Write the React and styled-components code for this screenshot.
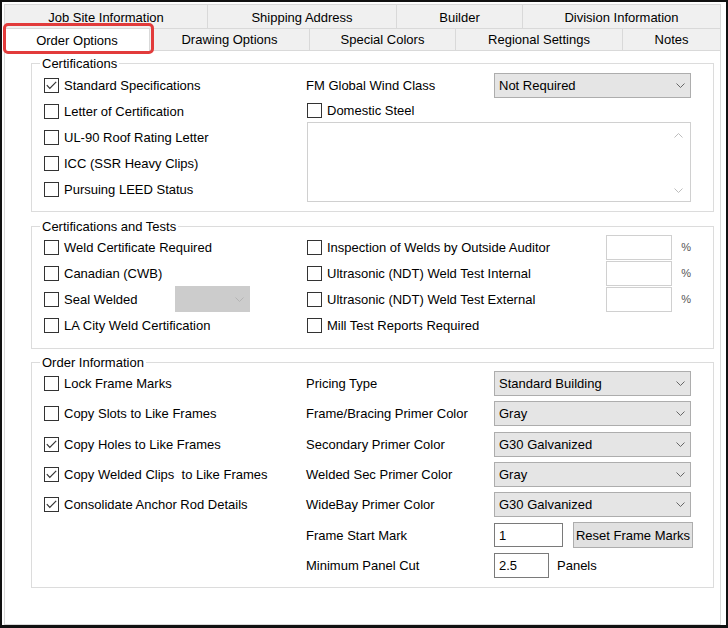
import React from 'react'
import styled, { createGlobalStyle } from 'styled-components'

const GlobalStyle = createGlobalStyle`
  html, body {
    margin: 0;
    padding: 0;
    background: #fff;
  }
  body {
    font-family: "Liberation Sans", Arial, sans-serif;
    font-size: 13px;
    color: #000;
  }
  * { box-sizing: border-box; }
`

const Frame = styled.div`
  position: relative;
  width: 728px;
  height: 628px;
  border: 2px solid #111;
  border-bottom-width: 3px;
  background: #fff;
  padding: 2px 5px 0 2px;
  display: flex;
  flex-direction: column;
`

const TabRow = styled.div`
  display: flex;
  height: ${props => props.h}px;
  flex: none;
`

const Tab = styled.div`
  width: ${props => props.w}px;
  flex: none;
  display: flex;
  align-items: center;
  justify-content: center;
  padding-top: ${props => props.shift || 0}px;
  background: ${props => (props.active ? '#fff' : '#f0f0f0')};
  border-top: 1px solid #d9d9d9;
  border-right: 1px solid #d9d9d9;
  margin-bottom: ${props => (props.active ? '-1px' : '0')};
  position: ${props => (props.active ? 'relative' : 'static')};
  z-index: ${props => (props.active ? 1 : 'auto')};
  &:first-child { border-left: 1px solid #d9d9d9; }
`

const Highlight = styled.div`
  position: absolute;
  left: 1px;
  top: 21px;
  width: 151px;
  height: 31px;
  border: 3px solid #e23b3b;
  border-radius: 5px;
  z-index: 2;
`

const Panel = styled.div`
  flex: 1;
  background: #fff;
  border: 1px solid #d9d9d9;
  padding: 12px 6px 0 26px;
`

const Group = styled.section`
  position: relative;
  border: 1px solid #dcdcdc;
  margin-top: ${props => props.mt || 0}px;
  padding: ${props => props.pt}px 22px ${props => props.pb}px 12px;
  display: grid;
  grid-template-columns: 262px 385px;
`

const Caption = styled.span`
  position: absolute;
  top: -8px;
  left: 8px;
  padding: 0 2px;
  line-height: 15px;
  background: #fff;
`

const Column = styled.div`
  display: flex;
  flex-direction: column;
`

const Line = styled.div`
  height: ${props => props.h}px;
  display: flex;
  align-items: center;
  flex: none;
`

const Label = styled.span`
  width: ${props => props.w}px;
  flex: none;
  white-space: nowrap;
`

const CheckWrap = styled.label`
  display: flex;
  align-items: center;
  gap: 5px;
  white-space: pre;
  width: ${props => (props.w ? `${props.w}px` : 'auto')};
  flex: ${props => (props.w ? 'none' : '1')};
  margin-left: ${props => (props.inset ? '1px' : '0')};
`

const Box = styled.span`
  width: 15px;
  height: 15px;
  flex: none;
  border: 1px solid #333;
  background: #fff;
  display: flex;
  align-items: center;
  justify-content: center;
`

const Select = styled.div`
  width: ${props => props.w}px;
  height: ${props => props.h || 25}px;
  flex: none;
  display: flex;
  align-items: center;
  justify-content: space-between;
  padding: 0 5px 0 4px;
  background: ${props => (props.disabled ? '#cccccc' : '#e5e5e5')};
  border: 1px solid ${props => (props.disabled ? '#cccccc' : '#adadad')};
  white-space: nowrap;
`

const Input = styled.div`
  width: ${props => props.w}px;
  height: ${props => props.h || 25}px;
  flex: none;
  display: flex;
  align-items: center;
  padding: 0 4px;
  background: #fff;
  border: 1px solid ${props => (props.disabled ? '#d0d0d0' : '#7a7a7a')};
`

const Percent = styled.span`
  width: 19px;
  flex: none;
  text-align: right;
  font-size: 11px;
  color: #555;
`

const Button = styled.div`
  width: 120px;
  height: 26px;
  margin-left: 10px;
  flex: none;
  display: flex;
  align-items: center;
  justify-content: center;
  background: #e1e1e1;
  border: 1px solid #adadad;
  white-space: nowrap;
`

const Suffix = styled.span`
  margin-left: 8px;
`

const Notes = styled.div`
  width: 384px;
  height: 80px;
  margin-left: 1px;
  border: 1px solid #d0d0d0;
  display: flex;
  justify-content: flex-end;
`

const ScrollArrows = styled.div`
  width: 20px;
  padding: 10px 3px 8px 0;
  display: flex;
  flex-direction: column;
  justify-content: space-between;
  align-items: center;
`

const Chevron = ({ up, color = '#666' }) => (
  <svg width="9" height="5" viewBox="0 0 9 5">
    <polyline
      points={up ? '0.5,4.5 4.5,0.5 8.5,4.5' : '0.5,0.5 4.5,4.5 8.5,0.5'}
      fill="none"
      stroke={color}
      strokeWidth="1"
    />
  </svg>
)

const Check = ({ checked, children, w, inset }) => (
  <CheckWrap w={w} inset={inset}>
    <Box>
      {checked && (
        <svg width="11" height="9" viewBox="0 0 11 9">
          <polyline points="0.8,4.2 3.8,7.4 10.2,0.8" fill="none" stroke="#333" strokeWidth="1.2" />
        </svg>
      )}
    </Box>
    {children}
  </CheckWrap>
)

const Dropdown = ({ w = 197, h, value, disabled }) => (
  <Select w={w} h={h} disabled={disabled}>
    <span>{value}</span>
    <Chevron color={disabled ? '#b4b4b4' : '#666'} />
  </Select>
)

const topTabs = [
  { label: 'Job Site Information', w: 204 },
  { label: 'Shipping Address', w: 189 },
  { label: 'Builder', w: 126 },
  { label: 'Division Information', w: 198 },
]

const bottomTabs = [
  { label: 'Order Options', w: 146, active: true },
  { label: 'Drawing Options', w: 160 },
  { label: 'Special Colors', w: 146 },
  { label: 'Regional Settings', w: 167 },
  { label: 'Notes', w: 98 },
]

const certifications = [
  { label: 'Standard Specifications', checked: true },
  { label: 'Letter of Certification' },
  { label: 'UL-90 Roof Rating Letter' },
  { label: 'ICC (SSR Heavy Clips)' },
  { label: 'Pursuing LEED Status' },
]

const weldTests = [
  'Inspection of Welds by Outside Auditor',
  'Ultrasonic (NDT) Weld Test Internal',
  'Ultrasonic (NDT) Weld Test External',
]

const frameOptions = [
  { label: 'Lock Frame Marks' },
  { label: 'Copy Slots to Like Frames' },
  { label: 'Copy Holes to Like Frames', checked: true },
  { label: 'Copy Welded Clips  to Like Frames', checked: true },
  { label: 'Consolidate Anchor Rod Details', checked: true },
]

const colorFields = [
  { label: 'Pricing Type', value: 'Standard Building' },
  { label: 'Frame/Bracing Primer Color', value: 'Gray' },
  { label: 'Secondary Primer Color', value: 'G30 Galvanized' },
  { label: 'Welded Sec Primer Color', value: 'Gray' },
  { label: 'WideBay Primer Color', value: 'G30 Galvanized' },
]

const ROW = 30.3

const App = () => {
  return (
    <>
      <GlobalStyle />
      <Frame>
        <TabRow h={24}>
          {topTabs.map(tab => (
            <Tab key={tab.label} w={tab.w} shift={2}>{tab.label}</Tab>
          ))}
        </TabRow>
        <TabRow h={22}>
          {bottomTabs.map(tab => (
            <Tab key={tab.label} w={tab.w} active={tab.active}>{tab.label}</Tab>
          ))}
        </TabRow>
        <Highlight />

        <Panel>
          <Group pt={8} pb={9}>
            <Caption>Certifications</Caption>
            <Column>
              {certifications.map(item => (
                <Line key={item.label} h={26}>
                  <Check checked={item.checked}>{item.label}</Check>
                </Line>
              ))}
            </Column>
            <Column>
              <Line h={26}>
                <Label w={188}>FM Global Wind Class</Label>
                <Dropdown value="Not Required" />
              </Line>
              <Line h={24}>
                <Check inset>Domestic Steel</Check>
              </Line>
              <Notes>
                <ScrollArrows>
                  <Chevron up color="#bdbdbd" />
                  <Chevron color="#bdbdbd" />
                </ScrollArrows>
              </Notes>
            </Column>
          </Group>

          <Group mt={14} pt={7} pb={10}>
            <Caption>Certifications and Tests</Caption>
            <Column>
              <Line h={26}>
                <Check>Weld Certificate Required</Check>
              </Line>
              <Line h={26}>
                <Check>Canadian (CWB)</Check>
              </Line>
              <Line h={26}>
                <Check w={131}>Seal Welded</Check>
                <Dropdown w={75} h={26} disabled />
              </Line>
              <Line h={26}>
                <Check>LA City Weld Certification</Check>
              </Line>
            </Column>
            <Column>
              {weldTests.map(label => (
                <Line key={label} h={26}>
                  <Check inset>{label}</Check>
                  <Input w={66} disabled />
                  <Percent>%</Percent>
                </Line>
              ))}
              <Line h={26}>
                <Check inset>Mill Test Reports Required</Check>
              </Line>
            </Column>
          </Group>

          <Group mt={13} pt={5.5} pb={6}>
            <Caption>Order Information</Caption>
            <Column>
              {frameOptions.map(item => (
                <Line key={item.label} h={ROW}>
                  <Check checked={item.checked}>{item.label}</Check>
                </Line>
              ))}
            </Column>
            <Column>
              {colorFields.map(field => (
                <Line key={field.label} h={ROW}>
                  <Label w={188}>{field.label}</Label>
                  <Dropdown value={field.value} />
                </Line>
              ))}
              <Line h={ROW}>
                <Label w={188}>Frame Start Mark</Label>
                <Input w={69} h={24}>1</Input>
                <Button>Reset Frame Marks</Button>
              </Line>
              <Line h={ROW}>
                <Label w={188}>Minimum Panel Cut</Label>
                <Input w={55}>2.5</Input>
                <Suffix>Panels</Suffix>
              </Line>
            </Column>
          </Group>
        </Panel>
      </Frame>
    </>
  )
}

export default App
